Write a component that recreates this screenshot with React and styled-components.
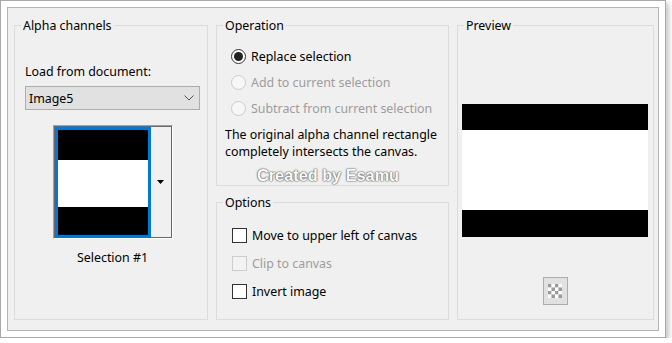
import styled, { createGlobalStyle } from 'styled-components';

const GlobalStyle = createGlobalStyle`
    body {
        margin: 0;
        background: #ffffff;
        font-family: 'Noto Sans', 'Open Sans', sans-serif;
        font-size: 12.4px;
        color: #000000;
    }
`;

const Frame = styled.div`
    width: 666px;
    height: 338px;
    box-sizing: border-box;
    border: 1px solid #a9a9a9;
    background: #ffffff;
    padding: 6px;
    box-shadow: 3px 3px 5px rgba(0, 0, 0, 0.22);
`;

const Dialog = styled.div`
    position: relative;
    height: 100%;
    box-sizing: border-box;
    border: 1px solid #b4b4b4;
    background: #f0f0f0;
    padding: 8px 4px 10px 6px;
    display: grid;
    grid-template-columns: 194px 233px 197px;
    column-gap: 8px;
`;

const Group = styled.fieldset`
    margin: 0;
    padding: 0;
    min-width: 0;
    border: 1px solid #dcdcdc;
    display: flex;
    flex-direction: column;
    ${(p) => p.$grow && 'flex: 1;'}
    ${(p) => p.$height && `height: ${p.$height}px; box-sizing: border-box; flex: none;`}
`;

// a little room above the text so it sits under the border line like the native one
const Legend = styled.legend`
    margin-left: 6px;
    padding: 2px 2px 0;
    line-height: 16px;
`;

const Column = styled.div`
    display: flex;
    flex-direction: column;
    gap: 7px;
`;

const AlphaBody = styled.div`
    display: flex;
    flex-direction: column;
    padding: 0 7px 0 10px;
`;

const Label = styled.div`
    margin-top: 30px;
    line-height: 16px;
`;

const Select = styled.div`
    margin-top: 6px;
    height: 24px;
    box-sizing: border-box;
    border: 1px solid #adadad;
    background: #e1e1e1;
    display: flex;
    align-items: center;
    justify-content: space-between;
    padding: 0 5px 0 3px;
`;

const ThumbFrame = styled.div`
    align-self: center;
    margin-top: 15px;
    width: 120px;
    height: 114px;
    box-sizing: border-box;
    border: 1px solid;
    border-color: #a0a0a0 #ffffff #ffffff #a0a0a0;
    display: flex;
`;

const ThumbInner = styled.div`
    flex: 1;
    display: flex;
    border-top: 1px solid #696969;
    border-left: 1px solid #696969;
`;

const ThumbImage = styled.div`
    width: 96px;
    box-sizing: border-box;
    border: 3px solid #0078d7;
    display: flex;
    flex-direction: column;
`;

const Band = styled.div`
    height: ${(p) => p.$h}px;
    flex: ${(p) => (p.$fill ? 1 : 'none')};
    background: ${(p) => (p.$dark ? '#000000' : '#ffffff')};
`;

const ThumbButton = styled.div`
    flex: 1;
    background: #f0f0f0;
    border-right: 1px solid #696969;
    border-bottom: 1px solid #696969;
    display: flex;
    align-items: center;
    justify-content: center;
`;

const Caption = styled.div`
    margin-top: 11px;
    line-height: 16px;
    text-align: center;
`;

const OperationBody = styled.div`
    padding: 9px 0 0 14px;
    display: flex;
    flex-direction: column;
`;

const ChoiceRow = styled.div`
    height: ${(p) => p.$h}px;
    display: flex;
    align-items: center;
    gap: 5px;
    color: ${(p) => (p.$disabled ? '#9d9d9d' : '#000000')};
    white-space: nowrap;
`;

const Radio = styled.span`
    width: 15px;
    height: 15px;
    box-sizing: border-box;
    border-radius: 50%;
    border: 1px solid ${(p) => (p.$disabled ? '#cccccc' : '#333333')};
    background: ${(p) => (p.$disabled ? '#f7f7f7' : '#ffffff')};
    display: flex;
    align-items: center;
    justify-content: center;

    &::after {
        content: '';
        display: ${(p) => (p.$checked ? 'block' : 'none')};
        width: 9px;
        height: 9px;
        border-radius: 50%;
        background: #222222;
    }
`;

const Note = styled.p`
    margin: 5px 0 0 -6px;
    line-height: 17px;
`;

const OptionsBody = styled.div`
    padding: 10px 0 0 15px;
    display: flex;
    flex-direction: column;
`;

const Checkbox = styled.span`
    width: 15px;
    height: 15px;
    box-sizing: border-box;
    border: 1px solid ${(p) => (p.$disabled ? '#cccccc' : '#333333')};
    background: ${(p) => (p.$disabled ? '#f3f3f3' : '#ffffff')};
`;

const PreviewBody = styled.div`
    display: flex;
    flex-direction: column;
    padding: 0 5px 0 4px;
`;

const PreviewImage = styled.div`
    margin-top: 70px;
    height: 133px;
    display: flex;
    flex-direction: column;
`;

const IconButton = styled.div`
    align-self: center;
    margin-top: 40px;
    width: 25px;
    height: 28px;
    box-sizing: border-box;
    border: 1px solid #adadad;
    background: #e1e1e1;
    display: flex;
    align-items: center;
    justify-content: center;
`;

const Watermark = styled.span`
    position: absolute;
    left: 249px;
    top: 157px;
    font-family: 'Liberation Sans', Arial, sans-serif;
    font-weight: bold;
    font-size: 16.3px;
    line-height: 20px;
    color: #fafafa;
    text-shadow: 0 0 2px #5a5a5a, 0 0 1px #6a6a6a, 0 0 1px #7a7a7a;
    pointer-events: none;
`;

function Chevron() {
    return (
        <svg width="10" height="6" viewBox="0 0 10 6">
            <polyline points="0.5,0.5 5,5 9.5,0.5" fill="none" stroke="#555" strokeWidth="1" />
        </svg>
    );
}

function DownArrow() {
    return (
        <svg width="7" height="4" viewBox="0 0 7 4">
            <polygon points="0,0 7,0 3.5,4" fill="#000" />
        </svg>
    );
}

function Checker() {
    const cells = [];
    for (let r = 0; r < 4; r++) {
        for (let c = 0; c < 4; c++) {
            cells.push(
                <rect
                    key={`${r}-${c}`}
                    x={c * 3.5}
                    y={r * 3.5}
                    width="3.5"
                    height="3.5"
                    fill={(r + c) % 2 === 0 ? '#9a9a9a' : '#ffffff'}
                />
            );
        }
    }
    return (
        <svg width="14" height="14" viewBox="0 0 14 14">
            {cells}
        </svg>
    );
}

export default function App() {
    return (
        <>
            <GlobalStyle />
            <Frame>
                <Dialog>
                    <Group>
                        <Legend>Alpha channels</Legend>
                        <AlphaBody>
                            <Label>Load from document:</Label>
                            <Select>
                                <span>Image5</span>
                                <Chevron />
                            </Select>
                            <ThumbFrame>
                                <ThumbInner>
                                    <ThumbImage>
                                        <Band $dark $h={30} />
                                        <Band $h={47} />
                                        <Band $dark $fill />
                                    </ThumbImage>
                                    <ThumbButton>
                                        <DownArrow />
                                    </ThumbButton>
                                </ThumbInner>
                            </ThumbFrame>
                            <Caption>Selection #1</Caption>
                        </AlphaBody>
                    </Group>

                    <Column>
                        <Group $height={170}>
                            <Legend>Operation</Legend>
                            <OperationBody>
                                <ChoiceRow $h={26}>
                                    <Radio $checked />
                                    Replace selection
                                </ChoiceRow>
                                <ChoiceRow $h={26} $disabled>
                                    <Radio $disabled />
                                    Add to current selection
                                </ChoiceRow>
                                <ChoiceRow $h={26} $disabled>
                                    <Radio $disabled />
                                    Subtract from current selection
                                </ChoiceRow>
                                <Note>
                                    The original alpha channel rectangle
                                    <br />
                                    completely intersects the canvas.
                                </Note>
                            </OperationBody>
                        </Group>
                        <Group $grow>
                            <Legend>Options</Legend>
                            <OptionsBody>
                                <ChoiceRow $h={28}>
                                    <Checkbox />
                                    Move to upper left of canvas
                                </ChoiceRow>
                                <ChoiceRow $h={28} $disabled>
                                    <Checkbox $disabled />
                                    Clip to canvas
                                </ChoiceRow>
                                <ChoiceRow $h={28}>
                                    <Checkbox />
                                    Invert image
                                </ChoiceRow>
                            </OptionsBody>
                        </Group>
                    </Column>

                    <Group>
                        <Legend>Preview</Legend>
                        <PreviewBody>
                            <PreviewImage>
                                <Band $dark $h={26} />
                                <Band $h={80} />
                                <Band $dark $fill />
                            </PreviewImage>
                            <IconButton>
                                <Checker />
                            </IconButton>
                        </PreviewBody>
                    </Group>

                    <Watermark>Created by Esamu</Watermark>
                </Dialog>
            </Frame>
        </>
    );
}
